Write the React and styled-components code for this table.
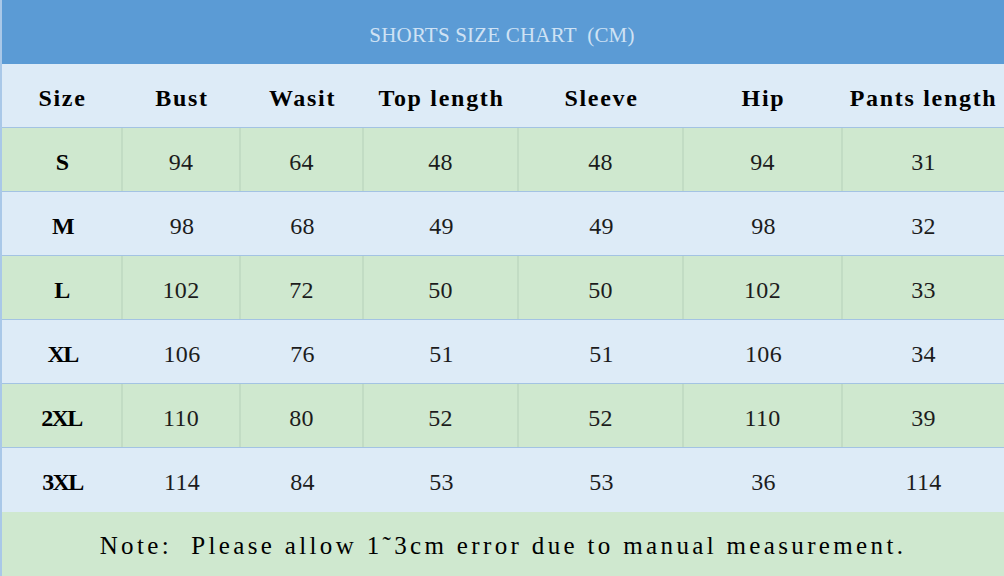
import React from "react";
import styled, { createGlobalStyle } from "styled-components";

const columns = ["Size", "Bust", "Wasit", "Top length", "Sleeve", "Hip", "Pants length"];

const rows = [
  ["S", 94, 64, 48, 48, 94, 31],
  ["M", 98, 68, 49, 49, 98, 32],
  ["L", 102, 72, 50, 50, 102, 33],
  ["XL", 106, 76, 51, 51, 106, 34],
  ["2XL", 110, 80, 52, 52, 110, 39],
  ["3XL", 114, 84, 53, 53, 36, 114],
];

const GlobalStyle = createGlobalStyle`
  html, body {
    margin: 0;
    padding: 0;
    background: #ddebf7;
  }
  body {
    font-family: "Liberation Serif", "DejaVu Serif", serif;
  }
`;

const Chart = styled.div`
  width: 1004px;
  height: 576px;
  overflow: hidden;
  display: flex;
  flex-direction: column;
  box-sizing: border-box;
  border-left: 2px solid #a9c8e8;
`;

const TitleBar = styled.div`
  height: 64px;
  flex: none;
  background: #5b9bd5;
  display: flex;
  align-items: center;
  justify-content: center;
  padding-top: 6px;
  box-sizing: border-box;
  margin-left: -2px;
  color: #cfe2f4;
  font-size: 21px;
  letter-spacing: 0.2px;
  white-space: pre;
`;

const Row = styled.div`
  height: 64px;
  flex: none;
  box-sizing: border-box;
  display: grid;
  grid-template-columns: 121px 118px 123px 155px 165px 159px 161px;
  background: ${(p) => (p.$tone === "green" ? "#cfe8cf" : "#ddebf7")};
  border-bottom: ${(p) => (p.$last ? "none" : "1px solid #a3c3e3")};
`;

const spacing = { header: "1.7px", size: "-1.6px", value: "0.3px" };

const Cell = styled.div`
  display: flex;
  align-items: center;
  justify-content: center;
  padding-top: 5px;
  white-space: nowrap;
  font-size: 24px;
  letter-spacing: ${(p) => spacing[p.$kind]};
  color: ${(p) => (p.$kind === "value" ? "#1c1c1c" : "#000")};
  font-weight: ${(p) => (p.$kind === "value" ? 400 : 700)};
  box-sizing: border-box;
  border-right: ${(p) => (p.$divider ? "2px solid #c2dcc4" : "none")};
`;

const Note = styled.div`
  flex: 1;
  background: #cfe8cf;
  display: flex;
  align-items: center;
  justify-content: center;
  padding-top: 4px;
  white-space: pre;
  font-size: 25px;
  letter-spacing: 3.35px;
  color: #000;
`;

export default function App() {
  return (
    <>
      <GlobalStyle />
      <Chart>
        <TitleBar>{"SHORTS SIZE CHART  (CM)"}</TitleBar>
        <Row $tone="blue">
          {columns.map((c) => (
            <Cell key={c} $kind="header">
              {c}
            </Cell>
          ))}
        </Row>
        {rows.map((r, i) => {
          const green = i % 2 === 0;
          return (
            <Row key={r[0]} $tone={green ? "green" : "blue"} $last={i === rows.length - 1}>
              {r.map((v, j) => (
                <Cell key={j} $kind={j === 0 ? "size" : "value"} $divider={green && j < r.length - 1}>
                  {v}
                </Cell>
              ))}
            </Row>
          );
        })}
        <Note>{"Note:  Please allow 1\u02DC3cm error due to manual measurement."}</Note>
      </Chart>
    </>
  );
}
